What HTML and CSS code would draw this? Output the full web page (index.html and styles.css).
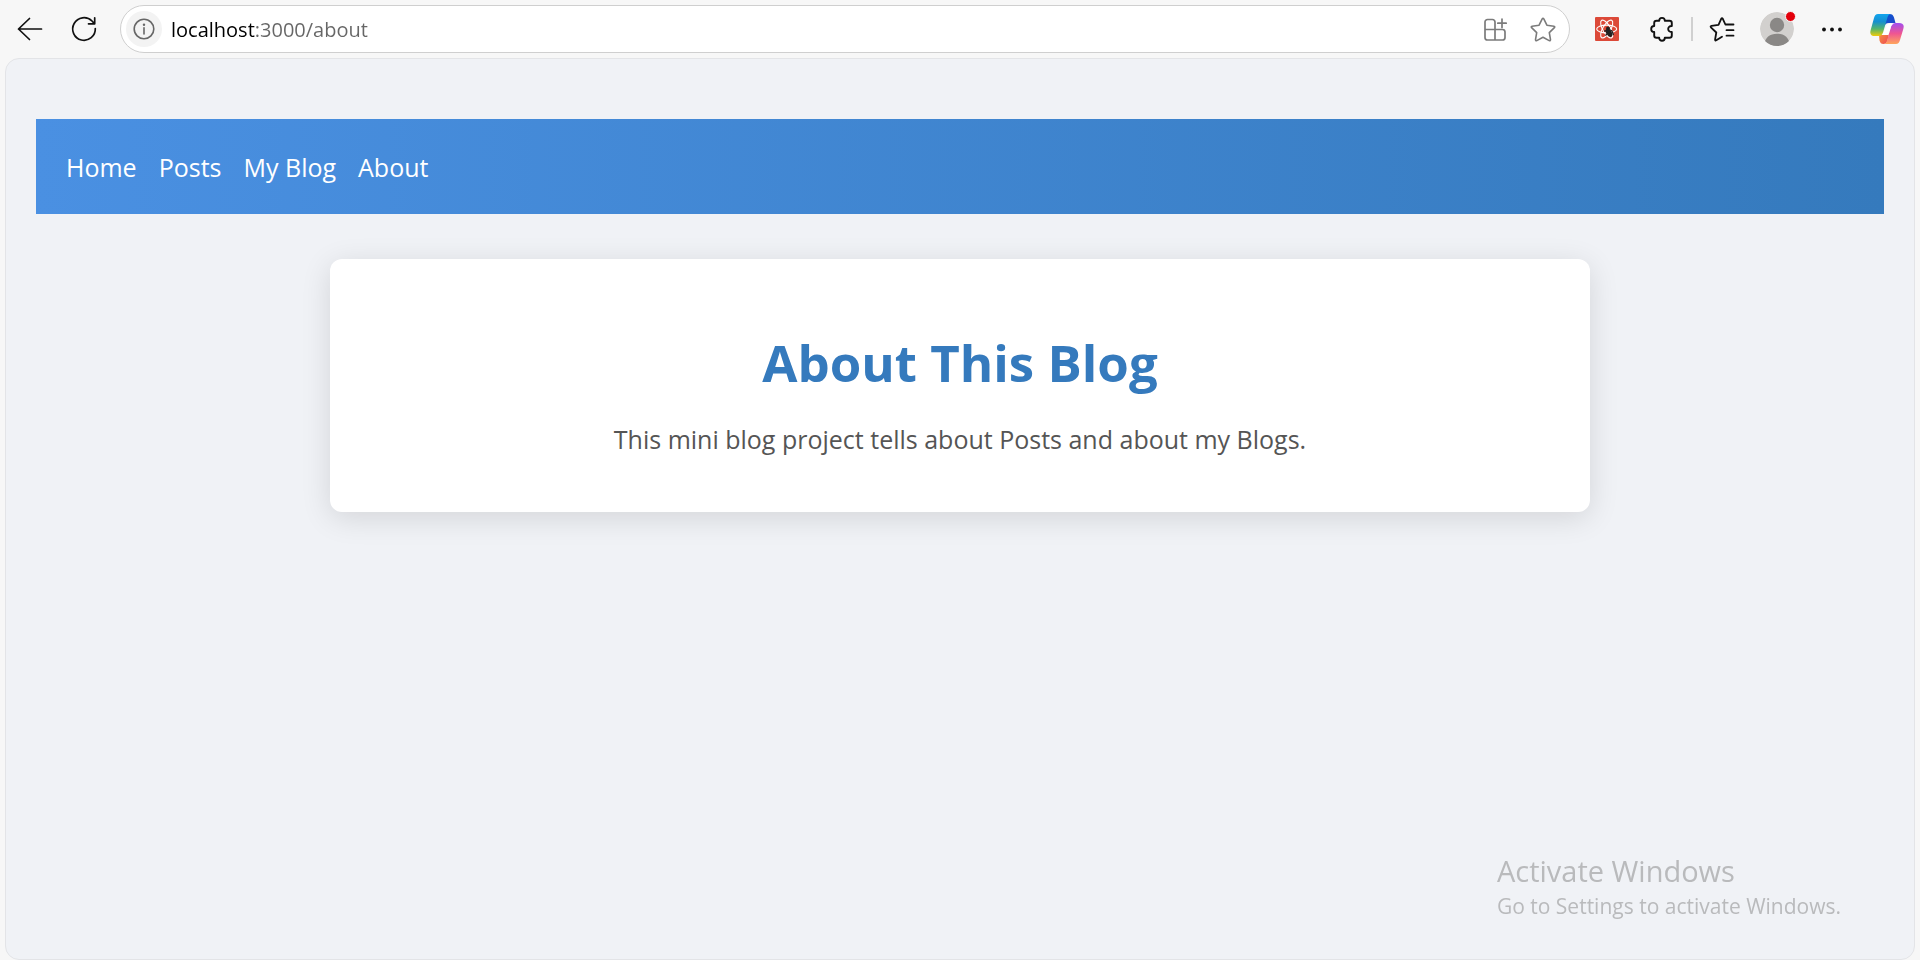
FILE: index.html
```
<!DOCTYPE html>
<html lang="en">
<head>
<meta charset="utf-8">
<meta name="viewport" content="width=device-width, initial-scale=1">
<title>About</title>
<link rel="stylesheet" href="styles.css">
</head>
<body class="window">
<header class="toolbar">
  <button class="tool" type="button" aria-label="Back">
    <svg class="icon" viewBox="0 0 28 28" fill="none" stroke="#111" stroke-width="1.7" stroke-linecap="round" stroke-linejoin="round"><path d="M25.5 14H2.5M13.5 3.5L2.5 14l11 10.500"/></svg>
  </button>
  <button class="tool tool-reload" type="button" aria-label="Reload">
    <svg class="icon" viewBox="0 0 28 28" fill="none" stroke="#111" stroke-width="1.7" stroke-linecap="round" stroke-linejoin="round"><path d="M25.300 13.500A11.300 11.300 0 1 1 22 6l2.300 2.500M24.700 2.800v6h-6.200"/></svg>
  </button>
  <form class="address">
    <button class="site-info" type="button" aria-label="View site information">
      <svg class="icon-small" viewBox="0 0 24 24" fill="none" stroke="#666" stroke-width="1.600"><circle cx="12" cy="12" r="9.800"/><path d="M12 10.800v6.200" stroke-linecap="round"/><circle cx="12" cy="7.700" r="1.200" fill="#666" stroke="none"/></svg>
    </button>
    <input class="url" type="text" value="localhost:3000/about" aria-label="Address" spellcheck="false">
    <button class="address-tool" type="button" aria-label="Install app">
      <svg class="icon" viewBox="0 0 28 28" fill="none" stroke="#7b7b7b" stroke-width="1.700" stroke-linejoin="round" stroke-linecap="round"><path d="M14 14.500V7a2.500 2.500 0 0 0-2.500-2.500H6.500A2.500 2.500 0 0 0 4 7v15.500A2.500 2.500 0 0 0 6.500 25H21.500a2.500 2.500 0 0 0 2.500-2.500V17a2.500 2.500 0 0 0-2.500-2.500H4M14 14.500V25M21 4v8.500M16.800 8.200h8.400"/></svg>
    </button>
    <button class="address-tool" type="button" aria-label="Add to favorites">
      <svg class="icon" viewBox="0 0 28 28" fill="none" stroke="#7b7b7b" stroke-width="1.600" stroke-linejoin="round"><path d="M13.200 3.900Q14 2.600 14.800 3.900L17.900 10.200 24.900 11.200Q26.300 11.600 25.400 12.700L20.300 17.600 21.500 24.600Q21.500 26.100 20.200 25.600L14 22.300 7.800 25.600Q6.500 26.100 6.500 24.600L7.700 17.600 2.600 12.700Q1.700 11.600 3.100 11.200L10.100 10.200Z"/></svg>
    </button>
  </form>
  <nav class="extensions" aria-label="Browser tools">
    <button class="tool" type="button" aria-label="React Developer Tools">
      <svg class="icon-small" viewBox="0 0 24 24"><rect width="24" height="24" rx="1" fill="#dc4938"/><g fill="none" stroke="#fff" stroke-width="1.100"><ellipse cx="11.700" cy="12" rx="10" ry="3.900"/><ellipse cx="11.700" cy="12" rx="10" ry="3.900" transform="rotate(60 11.700 12)"/><ellipse cx="11.700" cy="12" rx="10" ry="3.900" transform="rotate(120 11.700 12)"/></g><g stroke="#222" stroke-width="1.200" fill="#222"><ellipse cx="14" cy="15.700" rx="2" ry="3.800" transform="rotate(-35 14 15.700)"/><circle cx="13" cy="11.300" r="1.300"/><path d="M9 14.200l3.500-.700 2.500-.500 2 1 1.500 4M10.500 18.500l3-3 2.500 4.500" fill="none"/></g></svg>
    </button>
    <button class="tool" type="button" aria-label="Extensions">
      <svg class="icon" viewBox="0 0 28 28" fill="none" stroke="#111" stroke-width="1.900" stroke-linejoin="round"><path d="M8.500 5.700H11.200C11.200 1.900 16.800 1.900 16.800 5.700H21.500Q23.800 5.700 23.800 8V11C19 10.700 19 17.300 23.800 17V20.500Q23.800 22.800 21.500 22.800H16.800C16.800 26.800 11.200 26.800 11.200 22.800H8.500Q6.200 22.800 6.200 20.500V17C2.200 17 2.200 11 6.200 11V8Q6.200 5.700 8.500 5.700"/></svg>
    </button>
    <span class="divider"></span>
    <button class="tool" type="button" aria-label="Favorites">
      <svg class="icon" viewBox="0 0 28 28" fill="none" stroke="#111" stroke-width="1.800" stroke-linejoin="round" stroke-linecap="round"><path d="M14 21.700L8.300 25.300Q7 25.900 7.100 24.500L8.300 17.500 2.900 12.300Q2.100 11.200 3.500 10.900L10.500 9.900 13.200 3.800Q14 2.600 14.800 3.800L17.400 9.500H25.500M18.500 15.200h7M18.500 20.700h7"/></svg>
    </button>
    <button class="tool profile" type="button" aria-label="Profile">
      <svg class="avatar" viewBox="0 0 34 34"><defs><clipPath id="avatar-clip"><circle cx="17" cy="17" r="17"/></clipPath></defs><g clip-path="url(#avatar-clip)"><circle cx="17" cy="17" r="17" fill="#d2d0ce"/><circle cx="17" cy="13" r="7.200" fill="#8a8886"/><path d="M4 36C4 25.500 9.500 21.800 17 21.800S30 25.500 30 36z" fill="#8a8886"/></g></svg>
      <span class="alert-dot"></span>
    </button>
    <button class="tool" type="button" aria-label="Settings and more">
      <svg class="icon" viewBox="0 0 28 28" fill="#111"><circle cx="6" cy="14.500" r="1.900"/><circle cx="14" cy="14.500" r="1.900"/><circle cx="22" cy="14.500" r="1.900"/></svg>
    </button>
    <button class="tool" type="button" aria-label="Copilot">
      <svg class="copilot" viewBox="0 0 34 32">
        <defs>
          <linearGradient id="cool" x1="0" y1="0" x2="0" y2="1"><stop offset="0" stop-color="#12a5ee"/><stop offset=".35" stop-color="#168fcf"/><stop offset=".68" stop-color="#55b56b"/><stop offset="1" stop-color="#f0cb08"/></linearGradient>
          <linearGradient id="warm" x1="0" y1="0" x2="0" y2="1"><stop offset="0" stop-color="#a24df0"/><stop offset=".5" stop-color="#ef5592"/><stop offset="1" stop-color="#ffa65c"/></linearGradient>
          <linearGradient id="deep" x1="0" y1="0" x2="1" y2="1"><stop offset="0" stop-color="#0a57d0"/><stop offset="1" stop-color="#2444c8"/></linearGradient>
          <linearGradient id="ember" x1="0" y1="0" x2="1" y2="1"><stop offset="0" stop-color="#f8a23c"/><stop offset="1" stop-color="#ed3f55"/></linearGradient>
        </defs>
        <path d="M17 1h2.500c2.500 0 3.700 1 4.500 3.500L25.500 10H19c-3 0-4 1.500-5 4z" fill="url(#deep)"/>
        <path d="M9 22h8l3-5-2.500 10.500c-.800 2.500-2 3.500-4 3.500-2.500 0-3.200-1-4-3.500z" fill="url(#ember)"/>
        <path d="M8 1h13c-2 0-3 1.500-3.700 4L13 19.500c-.800 2.500-2 3.500-4.500 3.500H5c-4 0-5.500-2-4.300-6L4 5c.800-2.700 1.800-4 4-4z" fill="url(#cool)"/>
        <path d="M26 31H13.500c2 0 3-1.500 3.700-4L21 13.500C21.800 11 23 10 25.500 10H29c4 0 5.500 2 4.300 6L30 27c-.800 2.700-1.800 4-4 4z" fill="url(#warm)"/>
        <path d="M20.500 10.500h4.500c-2.200.300-3.300 1.200-4 3.200L18.500 22h-5.500c-1 0-.500-1 .500-2l3-7c.700-1.700 2-2.500 4-2.500z" fill="#fff"/>
      </svg>
    </button>
  </nav>
</header>
<div class="viewport">
  <nav class="site-nav" aria-label="Site">
    <a class="nav-link" href="#home">Home</a>
    <a class="nav-link" href="#posts">Posts</a>
    <a class="nav-link" href="#blog">My Blog</a>
    <a class="nav-link" href="#about">About</a>
  </nav>
  <main class="card">
    <h1 class="card-title">About This Blog</h1>
    <p class="card-text">This mini blog project tells about Posts and about my Blogs.</p>
  </main>
</div>
<aside class="watermark">
  <p class="watermark-title">Activate Windows</p>
  <p class="watermark-text">Go to Settings to activate Windows.</p>
</aside>
</body>
</html>
```
FILE: styles.css
```
* {
  box-sizing: border-box;
}

.window {
  display: flex;
  flex-direction: column;
  min-height: 100vh;
  margin: 0;
  padding: 0 5px;
  background: #f7f7f7;
  font-family: "Segoe UI", "Open Sans", "Noto Sans", sans-serif;
}

.toolbar {
  display: flex;
  align-items: center;
  height: 58px;
  padding: 0 8px 0 5px;
}

button {
  display: flex;
  flex: none;
  align-items: center;
  justify-content: center;
  padding: 0;
  border: 0;
  background: transparent;
}

.tool {
  width: 40px;
  height: 40px;
}

.tool-reload {
  margin: 0 16px 0 14px;
}

.icon {
  width: 28px;
  height: 28px;
}

.icon-small {
  width: 24px;
  height: 24px;
}

.address {
  display: flex;
  flex: 1;
  align-items: center;
  gap: 20px;
  height: 48px;
  padding: 0 12px 0 5px;
  border: 1px solid #cfcfcf;
  border-radius: 24px;
  background: #fff;
}

.site-info {
  width: 36px;
  height: 36px;
  border-radius: 50%;
  background: #f3f3f3;
}

.url {
  flex: 1;
  min-width: 0;
  margin-left: -11px;
  padding: 2px 0 0;
  border: 0;
  outline: 0;
  background: linear-gradient(90deg, #000 84px, #666 84px);
  background-clip: text;
  -webkit-text-fill-color: transparent;
  font-family: inherit;
  font-size: 20px;
  line-height: 28px;
}

.address-tool {
  width: 28px;
  height: 28px;
}

.extensions {
  display: flex;
  align-items: center;
  gap: 15px;
  padding-left: 17px;
}

.divider {
  width: 2px;
  height: 24px;
  margin: 0 -6px;
  background: #d0d0d0;
}

.profile {
  position: relative;
}

.avatar {
  width: 34px;
  height: 34px;
}

.alert-dot {
  position: absolute;
  top: 2px;
  right: 1px;
  width: 11px;
  height: 11px;
  border: 1px solid #f7f7f7;
  border-radius: 50%;
  background: #e3000b;
}

.copilot {
  width: 34px;
  height: 32px;
}

.viewport {
  flex: 1;
  padding: 60px 30px;
  border: 1px solid #e3e4e7;
  border-radius: 14px;
  background: #f0f2f6;
}

.site-nav {
  display: flex;
  gap: 22px;
  padding: 30px 30px 28px;
  background: linear-gradient(90deg, #4a90e2, #357abd);
}

.nav-link {
  color: #fff;
  font-size: 25px;
  line-height: 37px;
  text-decoration: none;
}

.card {
  max-width: 1260px;
  margin: 45px auto 0;
  padding: 71px 60px 53px;
  border-radius: 12px;
  background: #fff;
  box-shadow: 0 6px 30px rgba(0, 0, 0, 0.12);
  text-align: center;
}

.card-title {
  margin: 0 0 26px;
  color: #357abd;
  font-size: 51px;
  line-height: 64px;
}

.card-text {
  margin: 0;
  color: #555;
  font-size: 25px;
  line-height: 39px;
}

.watermark {
  position: fixed;
  right: 79px;
  bottom: 39px;
  color: #b9babc;
}

.watermark-title,
.watermark-text {
  margin: 0;
}

.watermark-title {
  font-size: 29px;
  line-height: 40px;
}

.watermark-text {
  font-size: 21px;
  line-height: 30px;
}
```
